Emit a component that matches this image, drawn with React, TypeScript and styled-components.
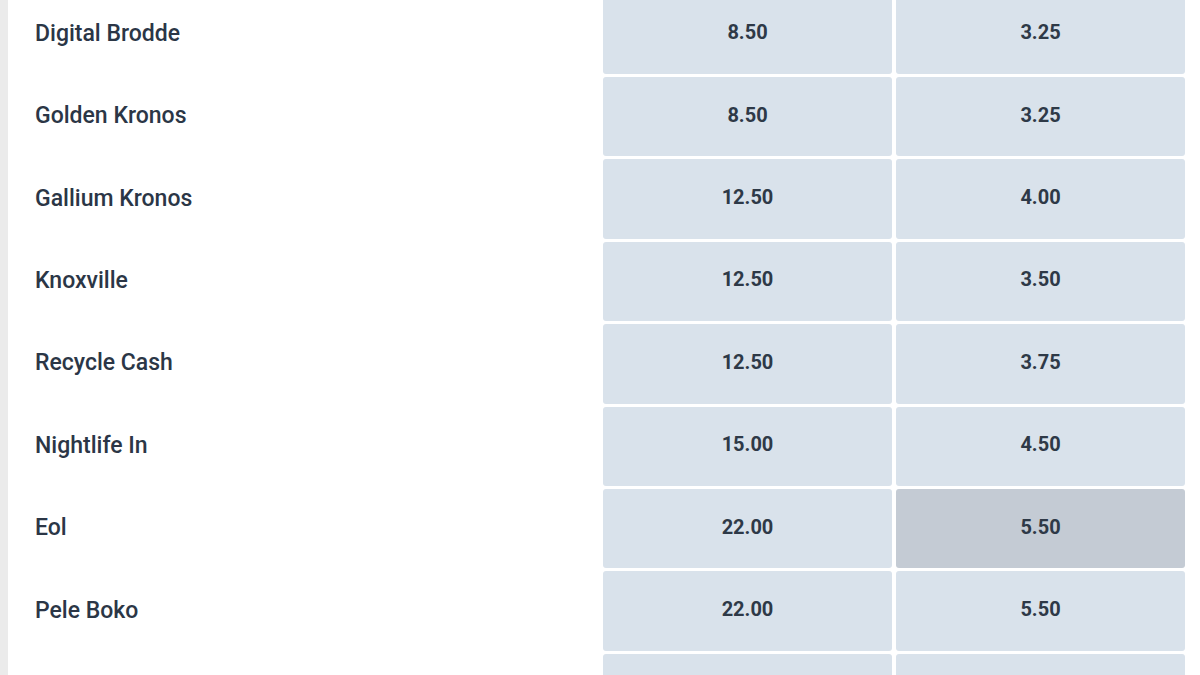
import React from 'react';
import styled, { createGlobalStyle } from 'styled-components';

const GlobalStyle = createGlobalStyle`
  html, body {
    margin: 0;
    padding: 0;
    background: #ffffff;
    overflow: hidden;
  }
  body {
    font-family: Roboto, "Noto Sans", "Liberation Sans", sans-serif;
  }
`;

interface IRunner {
  name: string;
  win: string;
  place: string;
  selected?: 'win' | 'place';
}

const runners: IRunner[] = [
  { name: 'Digital Brodde', win: '8.50', place: '3.25' },
  { name: 'Golden Kronos', win: '8.50', place: '3.25' },
  { name: 'Gallium Kronos', win: '12.50', place: '4.00' },
  { name: 'Knoxville', win: '12.50', place: '3.50' },
  { name: 'Recycle Cash', win: '12.50', place: '3.75' },
  { name: 'Nightlife In', win: '15.00', place: '4.50' },
  { name: 'Eol', win: '22.00', place: '5.50', selected: 'place' },
  { name: 'Pele Boko', win: '22.00', place: '5.50' },
  { name: '', win: '', place: '' },
];

const StyledPage = styled.div`
  display: flex;
  width: 1200px;
  height: 675px;
  overflow: hidden;
`;

const StyledSideStrip = styled.div`
  width: 8px;
  flex-shrink: 0;
  background: #ebebeb;
`;

const StyledList = styled.div`
  flex: 1;
  display: grid;
  grid-template-columns: 1fr 289px 289px;
  grid-auto-rows: 79.4px;
  column-gap: 4px;
  row-gap: 3px;
  padding-right: 15px;
  margin-top: -5.4px;
  align-content: start;
`;

const StyledName = styled.div`
  display: flex;
  align-items: center;
  padding-left: 27px;
  padding-bottom: 2px;
  font-size: 23px;
  font-weight: 500;
  color: #2b3646;
`;

const StyledOdds = styled.button<{ $selected?: boolean }>`
  display: flex;
  align-items: center;
  justify-content: center;
  padding: 0 0 4px 0;
  border: none;
  border-radius: 3px;
  background: ${p => (p.$selected ? '#c4cbd4' : '#d9e2eb')};
  font-family: inherit;
  font-size: 20px;
  font-weight: 700;
  color: #2e3947;
  cursor: pointer;
`;

const App = () => (
  <StyledPage>
    <GlobalStyle />
    <StyledSideStrip />
    <StyledList>
      {runners.map((r, i) => (
        <React.Fragment key={i}>
          <StyledName>{r.name}</StyledName>
          <StyledOdds $selected={r.selected === 'win'}>{r.win}</StyledOdds>
          <StyledOdds $selected={r.selected === 'place'}>{r.place}</StyledOdds>
        </React.Fragment>
      ))}
    </StyledList>
  </StyledPage>
);

export default App;
